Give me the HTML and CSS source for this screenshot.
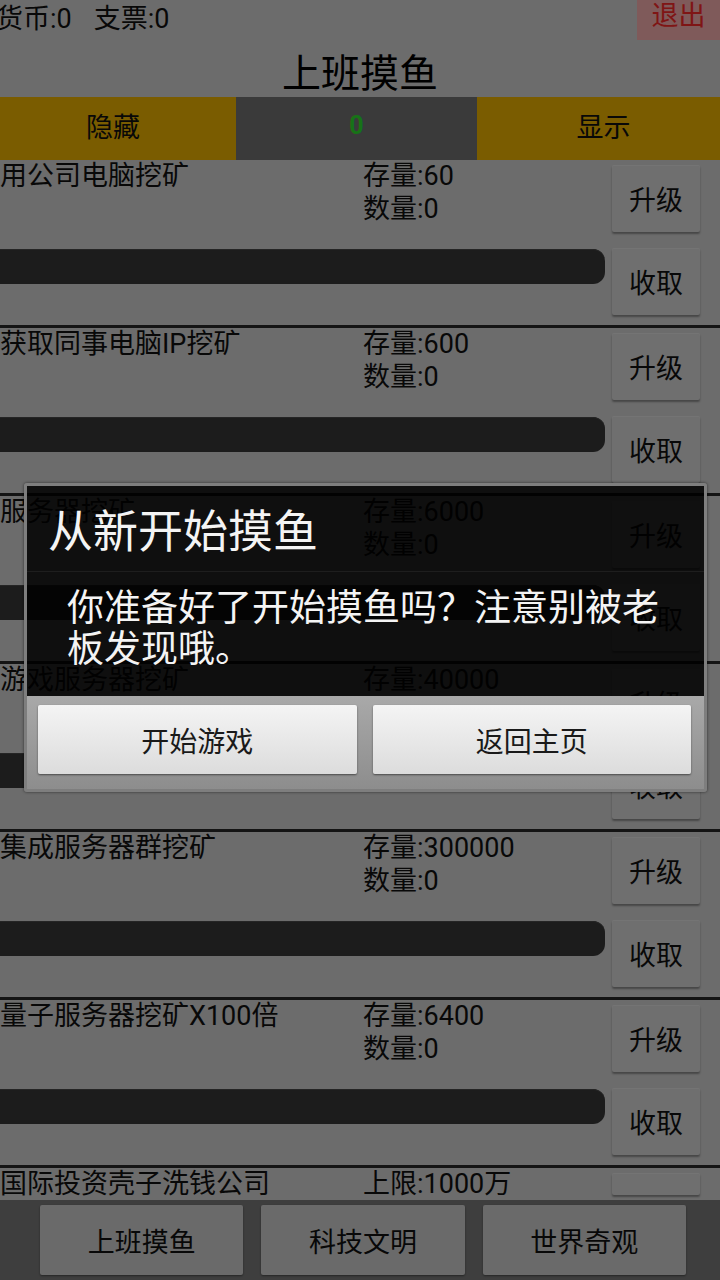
FILE: index.html
```html
<!DOCTYPE html>
<html lang="zh-CN">
<head>
<meta charset="UTF-8">
<title>上班摸鱼</title>
<link rel="stylesheet" href="styles.css">
</head>
<body>
    <div class="screen">
        <div class="topbar">
            <div class="wallet"><span>货币:0</span><span>支票:0</span></div>
            <button class="quit">退出</button>
        </div>
        <h1 class="title">上班摸鱼</h1>
        <div class="tabs">
            <div class="tab tab-yellow">隐藏</div>
            <div class="tab tab-count">0</div>
            <div class="tab tab-yellow">显示</div>
        </div>

        <div class="list">
            <div class="row">
                <div class="row-main">
                    <div class="row-info">
                        <div class="name">用公司电脑挖矿</div>
                        <div class="stats"><div>存量:60</div><div>数量:0</div></div>
                    </div>
                    <div class="bar"></div>
                </div>
                <div class="row-actions"><button class="btn">升级</button><button class="btn">收取</button></div>
            </div>
            <div class="row">
                <div class="row-main">
                    <div class="row-info">
                        <div class="name">获取同事电脑IP挖矿</div>
                        <div class="stats"><div>存量:600</div><div>数量:0</div></div>
                    </div>
                    <div class="bar"></div>
                </div>
                <div class="row-actions"><button class="btn">升级</button><button class="btn">收取</button></div>
            </div>
            <div class="row">
                <div class="row-main">
                    <div class="row-info">
                        <div class="name">服务器挖矿</div>
                        <div class="stats"><div>存量:6000</div><div>数量:0</div></div>
                    </div>
                    <div class="bar"></div>
                </div>
                <div class="row-actions"><button class="btn">升级</button><button class="btn">收取</button></div>
            </div>
            <div class="row">
                <div class="row-main">
                    <div class="row-info">
                        <div class="name">游戏服务器挖矿</div>
                        <div class="stats"><div>存量:40000</div><div>数量:0</div></div>
                    </div>
                    <div class="bar"></div>
                </div>
                <div class="row-actions"><button class="btn">升级</button><button class="btn">收取</button></div>
            </div>
            <div class="row">
                <div class="row-main">
                    <div class="row-info">
                        <div class="name">集成服务器群挖矿</div>
                        <div class="stats"><div>存量:300000</div><div>数量:0</div></div>
                    </div>
                    <div class="bar"></div>
                </div>
                <div class="row-actions"><button class="btn">升级</button><button class="btn">收取</button></div>
            </div>
            <div class="row">
                <div class="row-main">
                    <div class="row-info">
                        <div class="name">量子服务器挖矿X100倍</div>
                        <div class="stats"><div>存量:6400</div><div>数量:0</div></div>
                    </div>
                    <div class="bar"></div>
                </div>
                <div class="row-actions"><button class="btn">升级</button><button class="btn">收取</button></div>
            </div>
            <div class="row">
                <div class="row-main">
                    <div class="row-info">
                        <div class="name">国际投资壳子洗钱公司</div>
                        <div class="stats"><div>上限:1000万</div></div>
                    </div>
                </div>
                <div class="row-actions"><button class="btn btn-short"></button></div>
            </div>
        </div>

        <div class="navbar">
            <button class="nav-btn">上班摸鱼</button>
            <button class="nav-btn">科技文明</button>
            <button class="nav-btn">世界奇观</button>
        </div>

        <div class="mask"></div>

        <div class="dialog">
            <div class="dialog-title">从新开始摸鱼</div>
            <div class="dialog-msg">你准备好了开始摸鱼吗？注意别被老板发现哦。</div>
            <div class="dialog-actions">
                <button class="dialog-btn">开始游戏</button>
                <button class="dialog-btn">返回主页</button>
            </div>
        </div>
    </div>
</body>
</html>
```

FILE: styles.css
```css
body {
    margin: 0;
    font-family: Roboto, "Noto Sans CJK SC", sans-serif;
    font-size: 27px;
    color: #111;
}
button {
    font-family: inherit;
    font-size: 27px;
    color: #111;
    border: none;
    padding: 0;
    margin: 0;
}
.screen {
    position: relative;
    width: 720px;
    height: 1280px;
    overflow: hidden;
    background-color: #d8d8d8;
    display: flex;
    flex-direction: column;
}
.topbar {
    height: 40px;
    display: flex;
    justify-content: space-between;
}
.wallet {
    display: flex;
    gap: 22px;
    margin-left: -4px;
    line-height: 38px;
}
.quit {
    width: 83px;
    height: 40px;
    background-color: #ffb4b4;
    color: #ff2a2a;
    line-height: 30px;
    padding-bottom: 8px;
}
.title {
    margin: 0;
    height: 57px;
    padding-top: 12px;
    box-sizing: border-box;
    font-size: 39px;
    font-weight: normal;
    line-height: 45px;
    text-align: center;
    color: #000;
}
.tabs {
    height: 63px;
    display: grid;
    grid-template-columns: 236px 241px 1fr;
}
.tab {
    display: flex;
    align-items: center;
    justify-content: center;
    padding-bottom: 6px;
}
.tab-yellow {
    background-color: #f4b800;
}
.tab-yellow:first-child {
    padding-right: 10px;
}
.tab-yellow:last-child {
    padding-left: 10px;
}
.tab-count {
    background-color: #747474;
    color: #2ee62e;
    font-size: 25px;
    font-weight: bold;
}
.list {
    flex: 1;
    overflow: hidden;
}
.row {
    height: 165px;
    display: flex;
    border-bottom: 3px solid #282828;
}
.row-main {
    flex: 1;
    min-width: 0;
}
.row-info {
    display: flex;
    padding-top: 1px;
    line-height: 31px;
    white-space: nowrap;
}
.name {
    width: 363px;
}
.stats div + div {
    margin-top: 2px;
}
.bar {
    height: 35px;
    margin: 24px 7px 0 -20px;
    background-color: #383838;
    border-radius: 12px;
    box-shadow: inset 0 1px 0 #4a4a4a;
}
.row-actions {
    width: 88px;
    margin-right: 20px;
    padding-top: 5px;
    display: flex;
    flex-direction: column;
    gap: 16px;
}
.btn {
    height: 67px;
    background-color: #dedede;
    border-radius: 2px;
    box-shadow: 0 2px 2px rgba(0, 0, 0, 0.35), inset 0 1px 0 #e8e8e8;
}
.btn-short {
    height: 22px;
}
.navbar {
    height: 80px;
    box-sizing: border-box;
    padding: 5px 34px 5px 40px;
    background-color: #7c7c7c;
    display: grid;
    grid-template-columns: repeat(3, 1fr);
    gap: 18px;
}
.nav-btn {
    background-color: #d4d4d4;
    border-radius: 2px;
    box-shadow: 0 1px 2px rgba(0, 0, 0, 0.4);
}
.mask {
    position: absolute;
    inset: 0;
    background-color: rgba(0, 0, 0, 0.5);
}
.dialog {
    position: absolute;
    left: 24px;
    top: 483px;
    width: 683px;
    box-sizing: border-box;
    border: 3px solid #7e7e7e;
    border-radius: 3px;
    box-shadow: 0 0 3px rgba(0, 0, 0, 0.6);
    color: #f4f4f4;
}
.dialog-title {
    height: 86px;
    box-sizing: border-box;
    padding-left: 21px;
    background-color: rgba(0, 0, 0, 0.86);
    border-bottom: 1px solid #1e1e1e;
    font-size: 45px;
    line-height: 94px;
}
.dialog-msg {
    height: 124px;
    box-sizing: border-box;
    padding: 16px 40px 0 40px;
    background-color: rgba(0, 0, 0, 0.86);
    font-size: 37px;
    line-height: 41px;
}
.dialog-actions {
    padding: 9px 13px 15px 11px;
    background: linear-gradient(#a9a9a9, #8d8d8d);
    display: grid;
    grid-template-columns: 1fr 1fr;
    gap: 16px;
}
.dialog-btn {
    height: 69px;
    background: linear-gradient(#f4f4f4, #dcdcdc);
    border-radius: 2px;
    box-shadow: 0 1px 2px rgba(0, 0, 0, 0.5);
    color: #1a1a1a;
    font-size: 28px;
}
```
